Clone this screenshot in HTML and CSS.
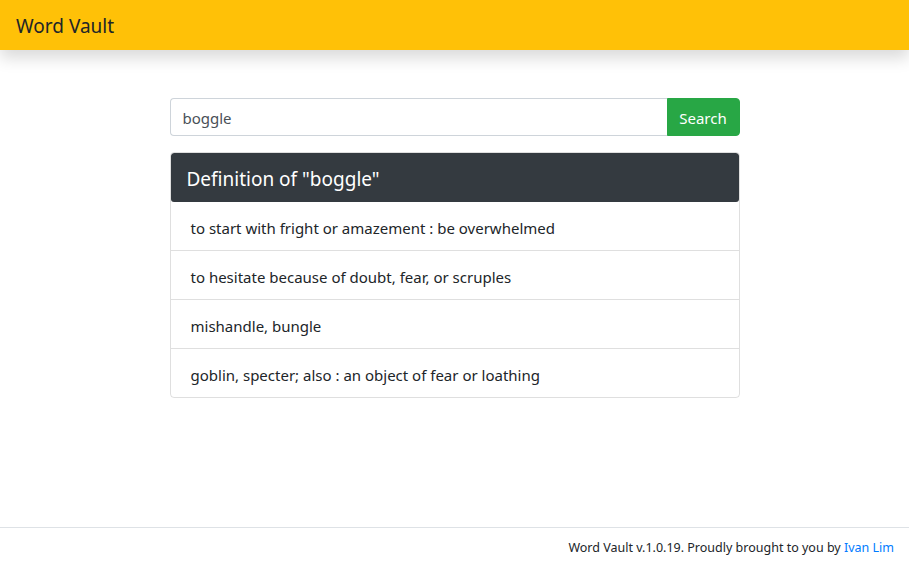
FILE: index.html
```html
<!DOCTYPE html>
<html>
<head>
<meta charset="utf-8">
<title>Word Vault</title>
<link rel="stylesheet" href="styles.css">
</head>
<body>
<div class="page">
  <nav class="navbar"><span class="brand">Word Vault</span></nav>
  <main class="main">
    <div class="content">
      <form class="search">
        <input class="search-input" type="text" value="boggle">
        <button class="search-btn" type="button">Search</button>
      </form>
      <div class="card">
        <div class="card-header">Definition of "boggle"</div>
        <ul class="list">
          <li class="item">to start with fright or amazement : be overwhelmed</li>
          <li class="item">to hesitate because of doubt, fear, or scruples</li>
          <li class="item">mishandle, bungle</li>
          <li class="item">goblin, specter; also : an object of fear or loathing</li>
        </ul>
      </div>
    </div>
  </main>
  <footer class="footer">Word Vault v.1.0.19. Proudly brought to you by <a class="link" href="#">Ivan Lim</a></footer>
</div>
</body>
</html>
```
FILE: styles.css
```css
* { box-sizing: border-box; }
html, body { margin: 0; padding: 0; height: 100%; }
body {
  font-family: "Noto Sans", "Open Sans", sans-serif;
  font-size: 15px;
  line-height: 1.5;
  color: #212529;
  background: #fff;
}
.page { display: flex; flex-direction: column; height: 100%; }
.navbar {
  height: 50px;
  background: #ffc107;
  display: flex;
  align-items: center;
  padding: 2px 16px 0;
  box-shadow: 0 8px 16px rgba(0,0,0,.15);
  position: relative;
  z-index: 1;
}
.brand { font-size: 19px; color: #212529; line-height: 30px; }
.main { flex: 1; display: flex; justify-content: center; padding-top: 48px; }
.content { width: 570px; }
.search { display: flex; margin: 0 0 16px; }
.search-input {
  flex: 1;
  height: 38px;
  border: 1px solid #ced4da;
  border-right: none;
  border-radius: 4px 0 0 4px;
  padding: 7px 12px 5px;
  font-family: inherit;
  font-size: 15px;
  color: #495057;
  outline: none;
}
.search-btn {
  width: 73px;
  height: 38px;
  border: 1px solid #28a745;
  background: #28a745;
  color: #fff;
  border-radius: 0 4px 4px 0;
  font-family: inherit;
  font-size: 15px;
  padding: 2px 0 0;
}
.card { border: 1px solid rgba(0,0,0,.125); border-radius: 4px; overflow: hidden; }
.card-header {
  background: #343a40;
  color: #fff;
  font-size: 19px;
  line-height: 30px;
  padding: 11px 16px 8px;
  border-radius: 3px;
}
.list { list-style: none; margin: 0; padding: 0; }
.item {
  padding: 14px 20px 10px 20px;
  line-height: 24px;
  border-top: 1px solid rgba(0,0,0,.125);
}
.item:first-child { border-top: none; }
.footer {
  border-top: 1px solid #dee2e6;
  height: 37px;
  padding: 9px 15px 0;
  text-align: right;
  font-size: 12.5px;
  line-height: 21px;
}
.link { color: #007bff; text-decoration: none; }
```
